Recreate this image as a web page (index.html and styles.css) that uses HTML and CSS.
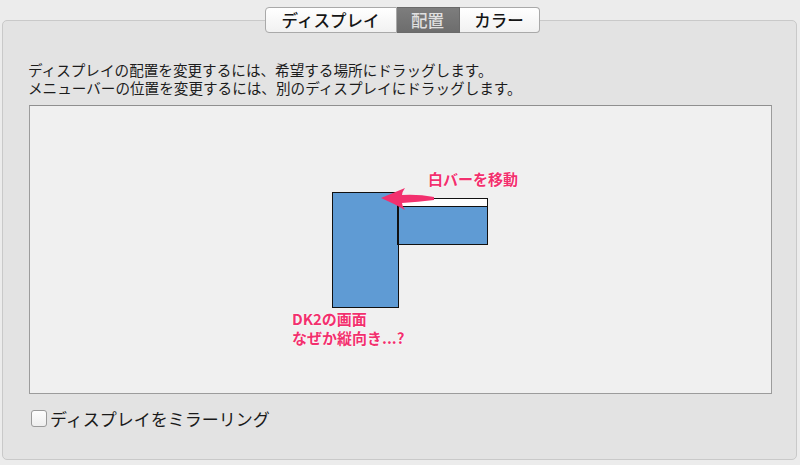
FILE: index.html
```html
<!DOCTYPE html>
<html lang="ja">
<head>
<meta charset="utf-8">
<link rel="stylesheet" href="styles.css">
</head>
<body>
<div class="window">
  <div class="tabs">
    <div class="tab">ディスプレイ</div>
    <div class="tab selected">配置</div>
    <div class="tab">カラー</div>
  </div>
  <div class="panel">
    <p class="desc"><span class="line">ディスプレイの配置を変更するには、希望する場所にドラッグします。</span><span class="line">メニューバーの位置を変更するには、別のディスプレイにドラッグします。</span></p>
    <div class="canvas">
      <div class="display tall"></div>
      <div class="display wide"><div class="menubar"></div><div class="screen"></div></div>
      <svg class="arrow" width="60" height="26" viewBox="0 0 60 26">
        <path d="M0 10 Q12 5 24 0 Q21 4 21 7 Q37 6 53 9 L53 12 Q37 14 21 15 Q21 18 24 22 Q12 15 0 10 Z" fill="#f2306e"/>
      </svg>
      <div class="note note-bar">白バーを移動</div>
      <div class="note note-dk2">DK2の画面<br>なぜか縦向き...?</div>
    </div>
    <label class="mirror"><span class="checkbox"></span>ディスプレイをミラーリング</label>
  </div>
</div>
</body>
</html>
```
FILE: styles.css
```css
html, body {
  margin: 0;
  padding: 0;
  background: #ececec;
  width: 800px;
  height: 465px;
  overflow: hidden;
  font-family: "Noto Sans CJK JP", "Noto Sans", sans-serif;
  color: #1a1a1a;
}
.window {
  padding: 7px 3px 0 2px;
}
.tabs {
  display: flex;
  justify-content: center;
  position: relative;
  z-index: 2;
  margin-left: 5px;
}
.tab {
  height: 24px;
  line-height: 24px;
  font-size: 16.5px;
  font-weight: 500;
  text-align: center;
  background: linear-gradient(#ffffff, #f1f1f1);
  border: 1px solid #a9a9a9;
  border-left: none;
  color: #151515;
}
.tab:first-child {
  border-left: 1px solid #a9a9a9;
  border-radius: 4px 0 0 4px;
  width: 130px;
}
.tab:nth-child(2) { width: 62px; }
.tab:last-child {
  border-radius: 0 4px 4px 0;
  width: 79px;
}
.tab.selected {
  background: linear-gradient(#7d7d7d, #6d6d6d);
  color: #e0e0e0;
  border-color: #6a6a6a;
}
.panel {
  margin-top: -13px;
  height: 440px;
  box-sizing: border-box;
  background: #e3e3e3;
  border: 1px solid #c9c9c9;
  border-radius: 5px;
  padding: 40px 24px 0 26px;
}
.desc {
  margin: 0 0 0 -1px;
  font-size: 14.6px;
  color: #1c1c1c;
  display: flex;
  flex-direction: column;
}
.line {
  display: block;
  height: 18px;
  line-height: 18px;
}
.canvas {
  position: relative;
  margin-top: 8px;
  height: 289px;
  box-sizing: border-box;
  background: #f0f0f0;
  border: 1px solid #9c9c9c;
  border-top-color: #8f8f8f;
}
.display {
  position: absolute;
  box-sizing: border-box;
  border: 1.5px solid #111;
}
.tall {
  left: 302px;
  top: 86px;
  width: 67px;
  height: 116px;
  background: #5f9bd4;
}
.wide {
  left: 367px;
  top: 92px;
  width: 91px;
  height: 47px;
  display: flex;
  flex-direction: column;
}
.menubar {
  height: 7px;
  background: #ffffff;
  border-bottom: 1.5px solid #111;
}
.screen {
  flex: 1;
  background: #5f9bd4;
  border-left: 1.5px solid #111;
}
.arrow {
  position: absolute;
  left: 351px;
  top: 82px;
}
.note {
  position: absolute;
  color: #f2306e;
  font-weight: bold;
  font-size: 15px;
  line-height: 19px;
  text-shadow: 0 0 2px #fff, 0 0 1px #fff;
}
.note-bar {
  left: 398px;
  top: 63px;
}
.note-dk2 {
  left: 262px;
  top: 203px;
}
.mirror {
  display: flex;
  align-items: center;
  margin-top: 12px;
  font-size: 17px;
  color: #1a1a1a;
  margin-left: 2px;
}
.checkbox {
  width: 16px;
  height: 17px;
  box-sizing: border-box;
  border: 1px solid #9a9a9a;
  border-radius: 3px;
  background: linear-gradient(#fdfdfd, #eeeeee);
  margin-right: 3px;
}
```
